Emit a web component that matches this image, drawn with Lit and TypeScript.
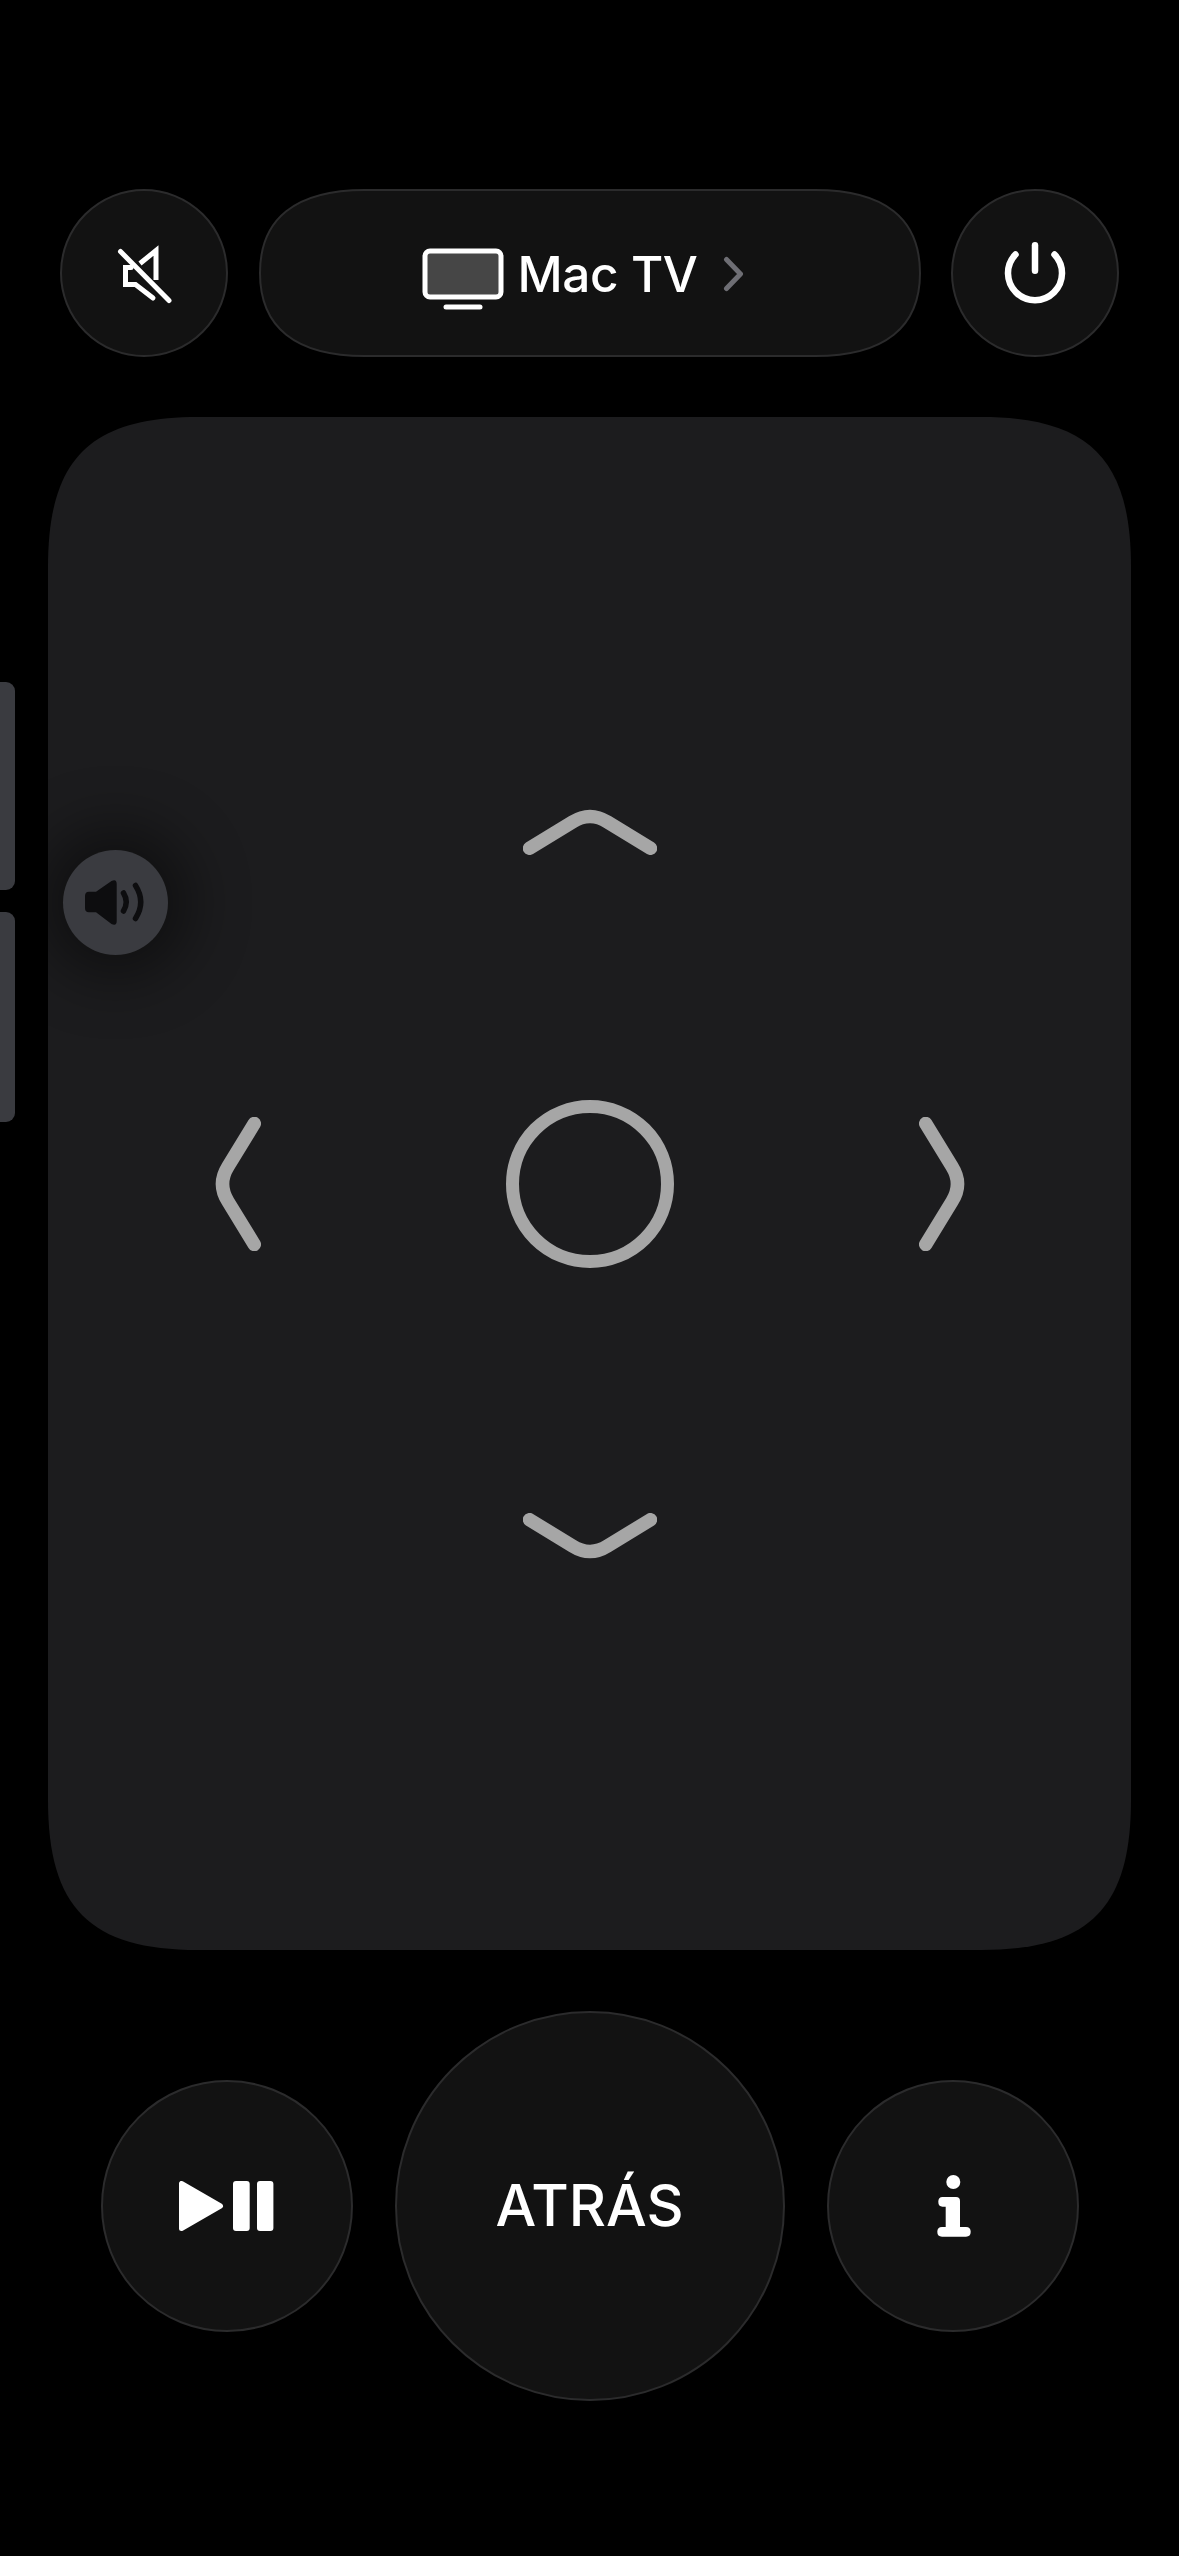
import { LitElement, html, css } from "lit";
import { customElement } from "lit/decorators.js";

@customElement("app-root")
export class AppRoot extends LitElement {
  static styles = css`
    :host {
      display: block;
      position: relative;
      width: 1179px;
      height: 2556px;
      background: #000;
      overflow: hidden;
      color: #fff;
      font-family: Inter, "Liberation Sans", sans-serif;
    }
    .page {
      display: flex;
      flex-direction: column;
      padding-top: 189px;
    }
    .top {
      display: flex;
      gap: 31px;
      padding: 0 60px;
      height: 168px;
    }
    .btn {
      box-sizing: border-box;
      background: #121212;
      border: 2px solid #2b2b2c;
      display: flex;
      align-items: center;
      justify-content: center;
      flex: none;
      border-radius: 50%;
    }
    .small { width: 168px; height: 168px; }
    .pill {
      position: relative;
      isolation: isolate;
      flex: 1;
      display: flex;
      align-items: center;
      justify-content: center;
      padding-right: 12px;
    }
    .pill-bg {
      position: absolute;
      left: 0;
      top: 0;
      z-index: -1;
      display: block;
    }
    .tv { margin: 11px 13px 0 0; display: block; flex: none; }
    .name {
      font-size: 49.5px;
      font-weight: 500;
      letter-spacing: -0.4px;
      line-height: 1;
      margin-top: 3px;
    }
    .more { margin-left: 25px; margin-top: 2px; display: block; flex: none; }
    .pad {
      margin: 60px 48px 0;
      width: 1083px;
      height: 1533px;
      background: #1c1c1e;
      display: flex;
      align-items: center;
      justify-content: center;
      clip-path: path("M150 0H933C1041 0 1083 42 1083 150V1383C1083 1491 1041 1533 933 1533H150C42 1533 0 1491 0 1383V150C0 42 42 0 150 0Z");
    }
    .dpad {
      display: grid;
      grid-template-columns: 50px 168px 50px;
      grid-template-rows: 50px 168px 50px;
      gap: 245px;
      justify-items: center;
      align-items: center;
    }
    .dpad svg { display: block; }
    .ok {
      box-sizing: border-box;
      width: 168px;
      height: 168px;
      border: 13px solid #a6a6a6;
      border-radius: 50%;
    }
    .bottom {
      margin-top: 61px;
      display: flex;
      align-items: center;
      justify-content: center;
      gap: 42px;
    }
    .side { width: 252px; height: 252px; }
    .back { width: 390px; height: 390px; }
    .back span {
      font-size: 57.5px;
      font-weight: 550;
      line-height: 1;
      letter-spacing: 0;
    }
    .vol {
      position: absolute;
      left: 0;
      width: 15px;
      background: #3a3b40;
      border-radius: 0 9px 9px 0;
    }
    .vol-up { top: 682px; height: 208px; }
    .vol-down { top: 912px; height: 210px; }
    .hud {
      position: absolute;
      left: 63px;
      top: 850px;
      width: 105px;
      height: 105px;
      border-radius: 50%;
      background: #3a3b40;
      box-shadow: 0 0 60px 22px rgba(0, 0, 0, 0.45);
      clip-path: inset(-200px -200px -200px -15px);
    }
    .hud svg { display: block; }
  `;

  render() {
    return html`
      <div class="page">
        <div class="top">
          <div class="btn small">
            <svg width="70" height="70" viewBox="0 0 70 70" fill="none" stroke="#fff" stroke-width="5">
              <path d="M31 25.5L47 12.5V42" />
              <path d="M22 29.5H16.5V46.5H26.5L44 60" stroke-linecap="round" />
              <path d="M11.5 13.5L60 62.5" stroke-linecap="round" />
            </svg>
          </div>
          <div class="pill">
            <svg class="pill-bg" width="662" height="168" viewBox="0 0 662 168">
              <path d="M106 1H556C626 1 661 30 661 84C661 138 626 167 556 167H106C36 167 1 138 1 84C1 30 36 1 106 1Z" fill="#121212" stroke="#2b2b2c" stroke-width="2" />
            </svg>
            <svg class="tv" width="82" height="62" viewBox="0 0 82 62">
              <rect x="3" y="3" width="76" height="46" rx="5" fill="#464646" stroke="#fff" stroke-width="5" />
              <rect x="21.5" y="56.5" width="39" height="5" rx="2.5" fill="#fff" />
            </svg>
            <span class="name">Mac TV</span>
            <svg class="more" width="22" height="36" viewBox="0 0 22 36" fill="none" stroke="#6e6e74" stroke-width="5" stroke-linecap="round" stroke-linejoin="round">
              <path d="M3.5 3.5L17.5 18L3.5 32.5" />
            </svg>
          </div>
          <div class="btn small">
            <svg width="70" height="70" viewBox="0 0 70 70" fill="none" stroke="#fff" stroke-width="6.5" stroke-linecap="round">
              <path d="M15.5 16.5A27 27 0 1 0 54.5 16.5" />
              <path d="M35 7.2V32.8" />
            </svg>
          </div>
        </div>

        <div class="pad">
          <div class="dpad">
            <span></span>
            <svg width="134" height="50" viewBox="0 0 134 50" fill="none" stroke="#a6a6a6" stroke-width="13.5" stroke-linecap="round">
              <path d="M6.5 43.3L49.5 17Q67 6 84.5 17L127.5 43.3" />
            </svg>
            <span></span>
            <svg width="50" height="134" viewBox="0 0 50 134" fill="none" stroke="#a6a6a6" stroke-width="13.5" stroke-linecap="round">
              <path d="M43.3 6.5L17 49.5Q6 67 17 84.5L43.3 127.5" />
            </svg>
            <div class="ok"></div>
            <svg width="50" height="134" viewBox="0 0 50 134" fill="none" stroke="#a6a6a6" stroke-width="13.5" stroke-linecap="round">
              <path d="M6.7 6.5L33 49.5Q44 67 33 84.5L6.7 127.5" />
            </svg>
            <span></span>
            <svg width="134" height="50" viewBox="0 0 134 50" fill="none" stroke="#a6a6a6" stroke-width="13.5" stroke-linecap="round">
              <path d="M6.5 6.7L49.5 33Q67 44 84.5 33L127.5 6.7" />
            </svg>
            <span></span>
          </div>
        </div>

        <div class="bottom">
          <div class="btn side">
            <svg width="95" height="50" viewBox="0 0 95 50" fill="#fff">
              <path d="M2.5 2.5V47.5L41.5 25Z" stroke="#fff" stroke-width="5" stroke-linejoin="round" />
              <rect x="54" y="0" width="16.7" height="50" rx="3" />
              <rect x="78" y="0" width="16.4" height="50" rx="3" />
            </svg>
          </div>
          <div class="btn back"><span>ATRÁS</span></div>
          <div class="btn side">
            <svg width="37" height="67" viewBox="-2 0 37 67" fill="#fff">
              <circle cx="17.3" cy="9" r="7" />
              <path d="M6.5 24H20Q24 24 24 28V54H30Q34.7 54 34.7 58.8Q34.7 63.7 30 63.7H6Q1.3 63.7 1.3 58.8Q1.3 54 6 54H9.7V33.7H6.5Q2.3 33.7 2.3 28.8Q2.3 24 6.5 24Z" />
            </svg>
          </div>
        </div>
      </div>

      <div class="vol vol-up"></div>
      <div class="vol vol-down"></div>
      <div class="hud">
        <svg width="105" height="105" viewBox="0 0 105 105" fill="none">
          <path d="M26 41.7H33L48.5 31Q53.7 28.5 53.7 34V71Q53.7 76.5 48.5 74L33 62.3H26Q22 62.3 22 58V46Q22 41.7 26 41.7Z" fill="#0d0d0f" />
          <path d="M60.5 43Q66 52 60.5 61" stroke="#0d0d0f" stroke-width="5.5" stroke-linecap="round" />
          <path d="M72.5 35.5Q83 52 72.5 68.5" stroke="#0d0d0f" stroke-width="5.5" stroke-linecap="round" />
        </svg>
      </div>
    `;
  }
}
